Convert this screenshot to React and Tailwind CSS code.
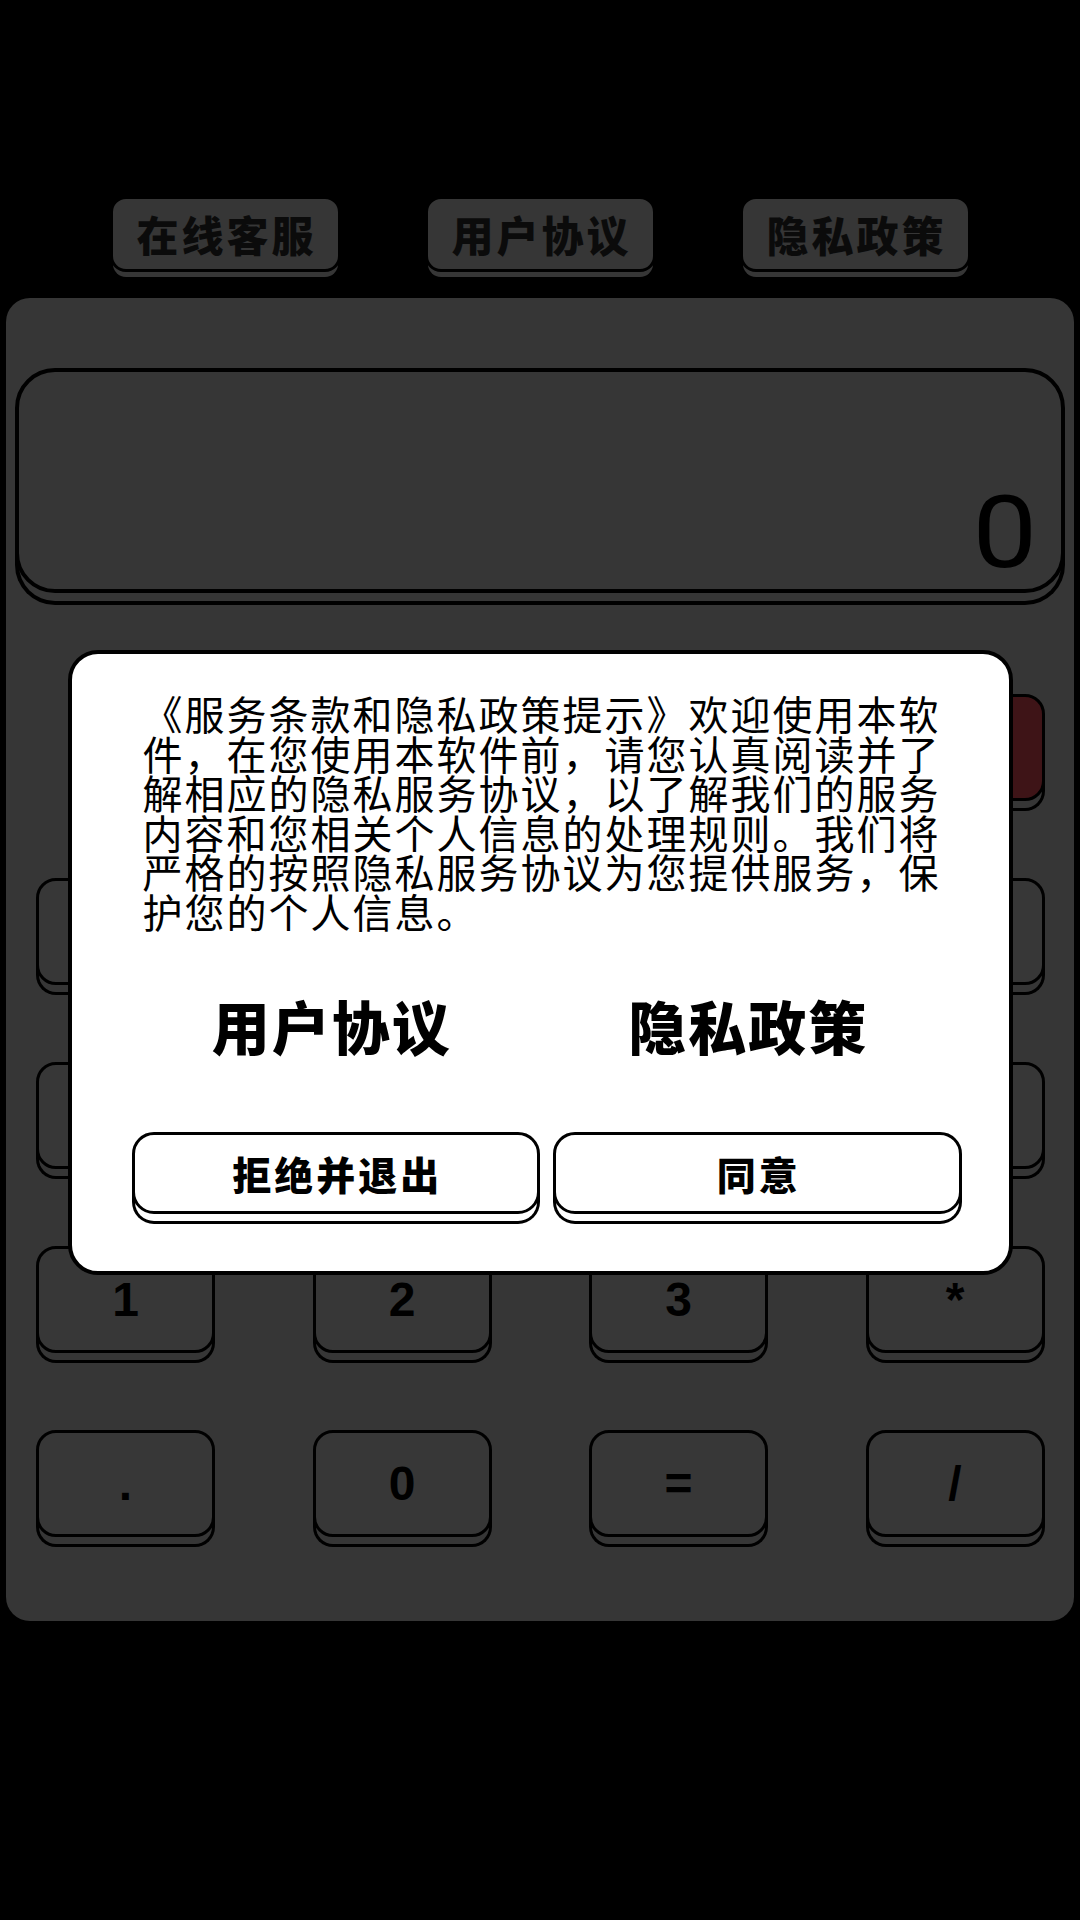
import React from 'react';

const LINKS = ['在线客服', '用户协议', '隐私政策'];

// calculator keys behind the dialog, '' = empty slot, '~' = key with its label covered
const KEY_ROWS = [
  ['', '~', '~', 'C'],
  ['~', '~', '~', '~'],
  ['~', '~', '~', '~'],
  ['1', '2', '3', '*'],
  ['.', '0', '=', '/'],
];

const NOTICE =
  '《服务条款和隐私政策提示》欢迎使用本软件，在您使用本软件前，请您认真阅读并了解相应的隐私服务协议，以了解我们的服务内容和您相关个人信息的处理规则。我们将严格的按照隐私服务协议为您提供服务，保护您的个人信息。';

function Key({ label }) {
  if (!label) return <div className="h-[107px]" />;
  const red = label === 'C';
  const shown = label !== '~' && !red;
  return (
    <div
      className={
        'h-[107px] rounded-[20px] border-[3px] border-black flex items-center justify-center shadow-[0_10px_0_-3px_#363636,0_10px_0_0_#000] ' +
        (red ? 'bg-[#3e1417]' : 'bg-[#373737]')
      }
    >
      {shown && (
        <span className="text-[48px] leading-none font-bold text-black [font-family:'Liberation_Sans',Arial,sans-serif]">
          {label}
        </span>
      )}
    </div>
  );
}

export default function App() {
  return (
    <div className="relative w-[1080px] h-[1920px] overflow-hidden bg-black [font-family:'Noto_Sans_CJK_SC','Noto_Sans',sans-serif]">
      {/* top links */}
      <div className="flex justify-center gap-[84px] pt-[196px]">
        {LINKS.map((l) => (
          <div
            key={l}
            className="w-[231px] h-[76px] flex items-center justify-center pl-[3px] rounded-[16px] border-[3px] border-black bg-[#363636] shadow-[0_8px_0_-3px_#363636,0_8px_0_0_#000] text-[42px] leading-none font-black tracking-[3px] text-[#0b0b0b]"
          >
            {l}
          </div>
        ))}
      </div>

      {/* calculator body */}
      <div className="mx-[6px] mt-[26px] h-[1323px] rounded-[24px] bg-[#363636] px-[9px] pt-[70px]">
        <div className="h-[225px] rounded-[40px] border-4 border-black bg-[#363636] shadow-[0_12px_0_-4px_#363636,0_12px_0_0_#000] flex items-end justify-end pr-[24px] pb-[6px]">
          <span className="origin-right scale-x-[1.15] text-[100px] leading-none text-black [font-family:Roboto,'Noto_Sans',sans-serif]">0</span>
        </div>

        <div className="mt-[101px] ml-[21px] grid grid-cols-[repeat(4,179px)] gap-x-[97.5px] gap-y-[77px]">
          {KEY_ROWS.flat().map((k, i) => (
            <Key key={i} label={k} />
          ))}
        </div>
      </div>

      {/* privacy dialog */}
      <div className="absolute inset-0 flex items-center justify-center pt-[5px]">
        <div className="w-[945px] rounded-[30px] border-4 border-black bg-white pt-[40px] pb-[57px] pl-[60px] pr-[47px]">
          <p className="ml-[11px] w-[800px] text-[40px] leading-[39.5px] tracking-[2px] text-black">{NOTICE}</p>

          <div className="mt-[65px] grid grid-cols-2 gap-x-[13px] text-[58px] leading-none font-black tracking-[2px] text-black">
            <div className="text-center pr-[8px]">用户协议</div>
            <div className="text-center pr-[18px]">隐私政策</div>
          </div>

          <div className="mt-[78px] grid grid-cols-2 gap-x-[13px]">
            {['拒绝并退出', '同意'].map((b) => (
              <button
                key={b}
                className="h-[82px] rounded-[22px] border-[3px] border-black bg-white shadow-[0_10px_0_-3px_#fff,0_10px_0_0_#000] flex items-center justify-center pl-[3px] text-[39px] leading-none font-black tracking-[3px] text-black"
              >
                {b}
              </button>
            ))}
          </div>
        </div>
      </div>
    </div>
  );
}
